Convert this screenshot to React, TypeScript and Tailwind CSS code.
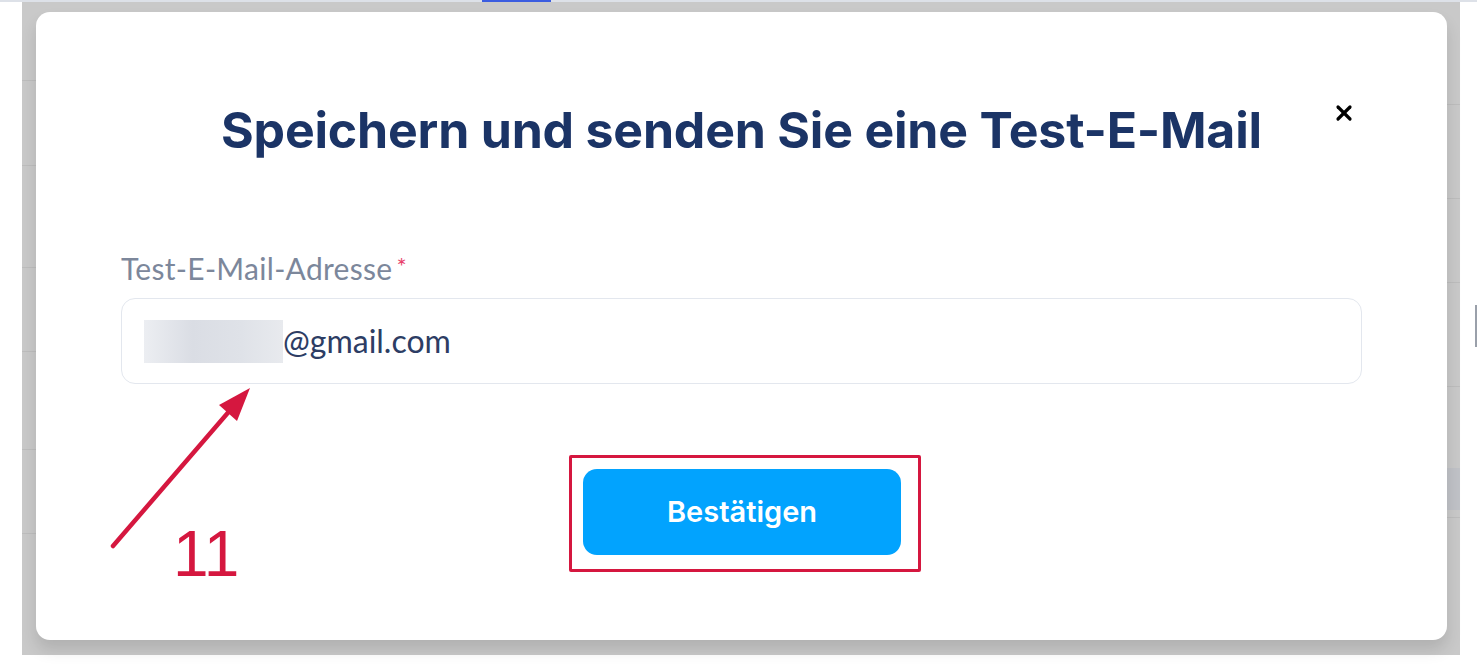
import { X } from "lucide-react";

const leftLines = [79, 165, 268, 353, 452, 537];
const rightLines = [103, 198, 283, 388, 520];

const BackdropStrip = ({ lines, width }: { lines: number[]; width: string }) => {
  let prev = 0;
  return (
    <div className={`flex flex-col ${width}`}>
      {lines.map((y) => {
        const h = y - prev;
        prev = y + 1;
        return (
          <div key={y} className="border-b border-[#bdbdbd]" style={{ height: h }} />
        );
      })}
    </div>
  );
};

const Annotation = () => (
  <>
    <svg
      className="absolute left-0 top-0 pointer-events-none"
      width="1477"
      height="665"
      viewBox="0 0 1477 665"
    >
      <line
        x1="113"
        y1="546"
        x2="232"
        y2="408"
        stroke="#d5173f"
        strokeWidth="4.5"
        strokeLinecap="round"
      />
      <polygon points="250,388 219,405 237,421" fill="#d5173f" />
    </svg>
    <span className="absolute left-[173px] top-[522px] text-[64px] leading-none text-[#d5173f] font-['Liberation_Sans',Arial,sans-serif]">
      11
    </span>
  </>
);

export default function App() {
  return (
    <div className="relative w-[1477px] h-[665px] overflow-hidden bg-white">
      {/* top strip of the page behind */}
      <div className="h-[2px] bg-[#dde1e8] flex">
        <div className="ml-[482px] w-[69px] bg-[#3b5de0]" />
      </div>

      <div className="flex">
        {/* dimmed page */}
        <div className="ml-[22px] w-[1438px] h-[653px] bg-[#c9c9c9] grid">
          <div className="col-start-1 row-start-1 flex justify-between">
            <BackdropStrip lines={leftLines} width="w-[14px]" />
            <div className="flex flex-col w-[13px] relative">
              <BackdropStrip lines={rightLines} width="w-[13px]" />
              <div className="mt-[-50px] h-[42px] bg-[#c0c2c7]" />
            </div>
          </div>

          {/* modal */}
          <div className="col-start-1 row-start-1 pt-[10px] pl-[14px]">
            <div className="relative w-[1411px] h-[628px] rounded-[14px] bg-white shadow-[0_10px_16px_rgba(0,0,0,0.12)] flex flex-col px-[85px]">
              <button className="absolute left-[1296px] top-[89px] w-[24px] h-[24px] flex items-center justify-center text-black">
                <X size={26} strokeWidth={3.2} />
              </button>

              <h2 className="mt-[88px] h-[60px] flex items-center justify-center text-[50px] font-bold text-[#1b3466] font-['Inter',sans-serif] tracking-[-0.2px]">
                Speichern und senden Sie eine Test-E-Mail
              </h2>

              <label className="mt-[90px] h-[36px] flex items-center text-[30px] tracking-[0.3px] text-[#7c879b] font-['Lato',sans-serif]">
                Test-E-Mail-Adresse
                <span className="ml-[4px] text-[#e8426c] self-start mt-[-2px] text-[24px]">*</span>
              </label>

              <div className="mt-[12px] h-[86px] rounded-[14px] border border-[#e3e7ee] flex items-center pl-[22px]">
                <span className="w-[139px] h-[43px] bg-[linear-gradient(90deg,#eceef2_0%,#dadde4_35%,#dfe2e8_70%,#e8eaee_100%)]" />
                <span className="text-[32px] text-[#2d3d64] font-['Lato',sans-serif]">
                  @gmail.com
                </span>
              </div>

              <div className="mt-[71px] flex justify-center">
                <div className="ml-[7px] border-[3px] border-[#d5173f] rounded-[2px] pl-[11px] pr-[17px] pt-[11px] pb-[14px]">
                  <button className="w-[318px] h-[86px] rounded-[14px] bg-[#02a3fe] text-white text-[29px] font-semibold font-['Inter',sans-serif]">
                    Bestätigen
                  </button>
                </div>
              </div>
            </div>
          </div>
        </div>

        {/* sliver of page on the right */}
        <div className="flex-1 flex flex-col">
          <div className="mt-[303px] ml-[15px] w-[2px] h-[42px] bg-[#9aa0aa]" />
        </div>
      </div>

      <Annotation />
    </div>
  );
}
